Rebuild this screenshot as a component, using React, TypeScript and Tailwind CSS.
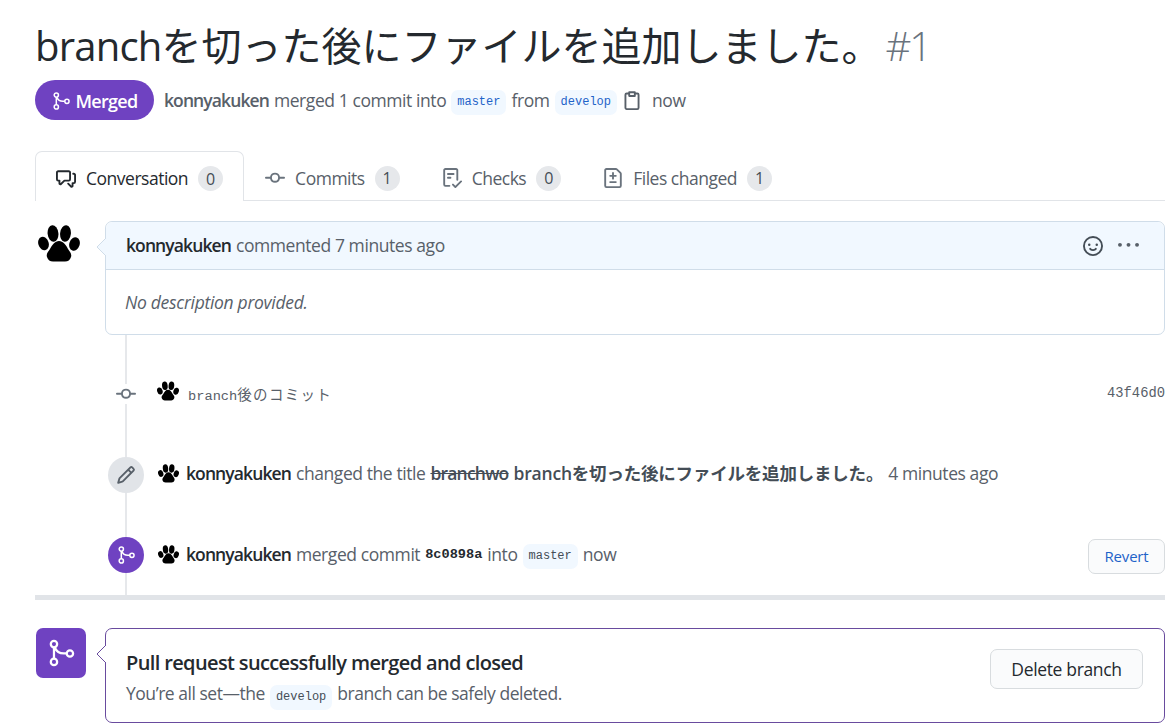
const sans = "font-['Open_Sans','Noto_Sans_CJK_JP',sans-serif]";
const mono = "font-['Liberation_Mono',monospace]";

function Octicon({ d, className }: { d: string; className?: string }) {
  return (
    <svg viewBox="0 0 16 16" fill="currentColor" className={className}>
      <path fillRule="evenodd" d={d} />
    </svg>
  );
}

// thinner than the stock git-merge octicon, the picture's rings are light
function MergeIcon({ className }: { className?: string }) {
  return (
    <svg viewBox="0 0 16 16" fill="none" stroke="currentColor" strokeWidth="1.2" className={className}>
      <circle cx="4.25" cy="3.25" r="1.7" />
      <circle cx="4.25" cy="12.75" r="1.7" />
      <circle cx="12.75" cy="8.25" r="1.7" />
      <path d="M4.25 5v6M4.7 5c.8 2.200 2.500 3.250 4.800 3.250h1.500" />
    </svg>
  );
}

const icons = {
  commit: "M11.93 8.5a4.002 4.002 0 0 1-7.86 0H.75a.75.75 0 0 1 0-1.5h3.32a4.002 4.002 0 0 1 7.86 0h3.32a.75.75 0 0 1 0 1.5Zm-1.43-.75a2.5 2.5 0 1 0-5 0 2.5 2.5 0 0 0 5 0Z",
  discussion: "M1.75 1h8.5c.966 0 1.75.784 1.75 1.75v5.5A1.75 1.75 0 0 1 10.25 10H7.061l-2.574 2.573A1.458 1.458 0 0 1 2 11.543V10h-.25A1.75 1.75 0 0 1 0 8.25v-5.5C0 1.784.784 1 1.75 1ZM1.5 2.75v5.5c0 .138.112.25.25.25h1a.75.75 0 0 1 .75.75v2.19l2.72-2.72a.749.749 0 0 1 .53-.22h3.5a.25.25 0 0 0 .25-.25v-5.5a.25.25 0 0 0-.25-.25h-8.5a.25.25 0 0 0-.25.25Zm13 2a.25.25 0 0 0-.25-.25h-.5a.75.75 0 0 1 0-1.5h.5c.966 0 1.75.784 1.75 1.75v5.5A1.75 1.75 0 0 1 14.25 12H14v1.543a1.458 1.458 0 0 1-2.487 1.03L9.22 12.28a.749.749 0 0 1 .326-1.275.749.749 0 0 1 .734.215l2.22 2.22v-2.19a.75.75 0 0 1 .75-.75h1a.25.25 0 0 0 .25-.25Z",
  checklist: "M2.5 1.75v11.5c0 .138.112.25.25.25h3.17a.75.75 0 0 1 0 1.5H2.75A1.75 1.75 0 0 1 1 13.25V1.75C1 .784 1.784 0 2.75 0h8.5C12.216 0 13 .784 13 1.75v7.736a.75.75 0 0 1-1.5 0V1.75a.25.25 0 0 0-.25-.25h-8.5a.25.25 0 0 0-.25.25Zm13.274 9.537v-.001l-4.557 4.45a.75.75 0 0 1-1.055-.008l-1.943-1.95a.75.75 0 0 1 1.062-1.058l1.419 1.425 4.026-3.932a.75.75 0 1 1 1.048 1.074ZM4.75 4h4.5a.75.75 0 0 1 0 1.5h-4.5a.75.75 0 0 1 0-1.5ZM4 7.75A.75.75 0 0 1 4.75 7h2a.75.75 0 0 1 0 1.5h-2A.75.75 0 0 1 4 7.75Z",
  fileDiff: "M1 1.75C1 .784 1.784 0 2.75 0h7.586c.464 0 .909.184 1.237.513l2.914 2.914c.329.328.513.773.513 1.237v9.586A1.75 1.75 0 0 1 13.25 16H2.75A1.75 1.75 0 0 1 1 14.25Zm1.75-.25a.25.25 0 0 0-.25.25v12.5c0 .138.112.25.25.25h10.5a.25.25 0 0 0 .25-.25V4.664a.25.25 0 0 0-.073-.177l-2.914-2.914a.25.25 0 0 0-.177-.073ZM8 3.25a.75.75 0 0 1 .75.75v1.5h1.5a.75.75 0 0 1 0 1.5h-1.5v1.5a.75.75 0 0 1-1.5 0V7h-1.5a.75.75 0 0 1 0-1.5h1.5V4A.75.75 0 0 1 8 3.25Zm-3 8a.75.75 0 0 1 .75-.75h4.5a.75.75 0 0 1 0 1.5h-4.5a.75.75 0 0 1-.75-.75Z",
  smiley: "M8 0a8 8 0 1 1 0 16A8 8 0 0 1 8 0ZM1.5 8a6.5 6.5 0 1 0 13 0 6.5 6.5 0 0 0-13 0Zm3.82 1.636a.75.75 0 0 1 1.038.175l.007.009c.103.118.22.222.35.31.264.178.683.37 1.285.37.602 0 1.02-.192 1.285-.371.13-.088.247-.192.35-.31l.007-.008a.75.75 0 0 1 1.222.87l-.022-.015c.02.013.021.015.021.015v.001l-.001.002-.002.003-.005.007-.014.019a2.066 2.066 0 0 1-.184.213c-.16.166-.338.316-.53.445-.63.418-1.37.638-2.127.629-.946 0-1.652-.308-2.126-.63a3.331 3.331 0 0 1-.715-.657l-.014-.02-.005-.006-.002-.003v-.002h-.001l.613-.432-.614.43a.75.75 0 0 1 .183-1.044ZM12 7a1 1 0 1 1-2 0 1 1 0 0 1 2 0ZM5 8a1 1 0 1 1 0-2 1 1 0 0 1 0 2Z",
  kebab: "M8 9a1.5 1.5 0 1 0 0-3 1.5 1.5 0 0 0 0 3ZM1.5 9a1.5 1.5 0 1 0 0-3 1.5 1.5 0 0 0 0 3Zm13 0a1.5 1.5 0 1 0 0-3 1.5 1.5 0 0 0 0 3Z",
  pencil: "M11.013 1.427a1.75 1.75 0 0 1 2.474 0l1.086 1.086a1.75 1.75 0 0 1 0 2.474l-8.61 8.61c-.21.21-.47.364-.756.445l-3.251.93a.75.75 0 0 1-.927-.928l.929-3.25c.081-.286.235-.547.445-.758l8.61-8.61Zm.176 4.823L9.75 4.81l-6.286 6.287a.253.253 0 0 0-.064.108l-.558 1.953 1.953-.558a.253.253 0 0 0 .108-.064Zm1.238-3.763a.25.25 0 0 0-.354 0L10.811 3.75l1.439 1.44 1.263-1.263a.25.25 0 0 0 0-.354Z",
  clippy: "M5.75 1a.75.75 0 0 0-.75.75v.25H3.75A1.75 1.75 0 0 0 2 3.75v10.5c0 .966.784 1.75 1.75 1.75h8.5A1.75 1.75 0 0 0 14 14.25V3.75A1.75 1.75 0 0 0 12.25 2H11v-.25a.75.75 0 0 0-.75-.75ZM6.500 2.500h3V4h-3ZM5 3.500v1.250c0 .414.336.75.75.75h4.500a.75.75 0 0 0 .75-.75V3.500h1.250a.25.25 0 0 1 .25.25v10.500a.25.25 0 0 1-.25.25h-8.500a.25.25 0 0 1-.25-.25V3.750a.25.25 0 0 1 .25-.25Z",
};

function Paw({ className }: { className?: string }) {
  return (
    <svg viewBox="0 0 42 37" fill="#000" className={className}>
      <ellipse cx="5.500" cy="18.500" rx="5.200" ry="6.800" transform="rotate(-18 5.500 18.500)" />
      <ellipse cx="15" cy="8.500" rx="5.400" ry="8.300" transform="rotate(-6 15 8.500)" />
      <ellipse cx="27.500" cy="8.500" rx="5.400" ry="8.300" transform="rotate(6 27.500 8.500)" />
      <ellipse cx="36.500" cy="19" rx="5.200" ry="6.800" transform="rotate(18 36.500 19)" />
      <path d="M21 16c4 0 7 4 9 8 2 3 4 5 3 8-1 3-3 4.500-6 4.500H15c-3 0-5-1.500-6-4.500-1-3 1-5 3-8 2-4 5-8 9-8Z" />
    </svg>
  );
}

function Tab({ icon, label, count, active }: { icon: string; label: string; count: number; active?: boolean }) {
  return (
    <div
      className={
        active
          ? "flex items-center h-[50px] pt-1 px-5 border border-b-0 border-[#e1e4e8] rounded-t-[7px] bg-white text-[#24292e] relative"
          : "flex items-center h-[50px] pt-1 px-5 border border-transparent text-[#586069]"
      }
    >
      <Octicon d={icon} className={active ? "w-5 h-5 text-[#24292e]" : "w-5 h-5 text-[#6a737d]"} />
      <span className="ml-[10px] text-[17.5px] tracking-[-0.49px]">{label}</span>
      <span className="ml-[10px] w-[25px] h-[25px] rounded-full bg-[#e6e8eb] text-[#444d56] text-[16px] tracking-normal flex items-center justify-center">
        {count}
      </span>
    </div>
  );
}

function Chip({ children, blue }: { children: string; blue?: boolean }) {
  return (
    <span
      className={
        `inline-flex items-center h-[25px] px-[6px] rounded-[7px] bg-[#f1f8ff] ${mono} text-[12px] tracking-normal mx-[5px] align-middle translate-y-[2px] ` +
        (blue ? "text-[#1f63c9]" : "text-[#444d56]")
      }
    >
      {children}
    </span>
  );
}

function Caret({ border, fill }: { border: string; fill: string }) {
  return (
    <svg viewBox="0 0 10 18" className="absolute left-[-10px] w-[10px] h-[18px] top-[16px]">
      <path d="M10 0 L1 9 L10 18" fill={fill} stroke={border} strokeWidth="1" />
    </svg>
  );
}

export default function App() {
  return (
    <div className={`${sans} w-[1172px] h-[728px] overflow-hidden bg-white pl-[35px] pr-[7px] text-[17.5px] tracking-[-0.42px] text-[#586069]`}>
      <h1 className="h-[80px] pt-[21px] text-[40px] leading-[50px] tracking-normal text-[#24292e] whitespace-nowrap">
        <span className="tracking-[-0.8px]">branch</span>を切った後にファイルを追加しました。
        <span className="ml-[4px] text-[#6a737d] font-light tracking-[-2px]">#1</span>
      </h1>

      <div className="flex items-center h-10 whitespace-nowrap">
        <span className="flex items-center justify-center pt-[2px] w-[119px] h-10 rounded-full bg-[#6f42c1] text-white text-[18px] tracking-[-0.7px] font-semibold">
          <MergeIcon className="w-5 h-5 mr-[4px]" />
          Merged
        </span>
        <div className="ml-[10px] flex items-center">
          <span className="font-semibold tracking-[-0.9px]">konnyakuken</span>
          <span className="ml-[5px]">merged 1 commit into</span>
          <Chip blue>master</Chip>
          <span>from</span>
          <Chip blue>develop</Chip>
          <Octicon d={icons.clippy} className="w-5 h-5 text-[#586069]" />
          <span className="ml-[10px]">now</span>
        </div>
      </div>

      <div className="flex mt-[31px] border-b border-[#e1e4e8] h-[50px]">
        <Tab icon={icons.discussion} label="Conversation" count={0} active />
        <Tab icon={icons.commit} label="Commits" count={1} />
        <Tab icon={icons.checklist} label="Checks" count={0} />
        <Tab icon={icons.fileDiff} label="Files changed" count={1} />
      </div>

      <div className="flex pt-5">
        <div className="w-[70px] shrink-0 pt-[4px]">
          <Paw className="ml-[3px] w-[42px] h-[37px]" />
        </div>
        <div className="relative flex-1 h-[114px] border border-[#d0dde9] rounded-[7px] bg-white">
          <Caret border="#d0dde9" fill="#f1f8ff" />
          <div className="flex items-center h-[48px] px-5 bg-[#f1f8ff] border-b border-[#d0dde9] rounded-t-[7px]">
            <span className="font-semibold tracking-[-0.9px] text-[#24292e]">konnyakuken</span>
            <span className="ml-[5px]">commented 7 minutes ago</span>
            <Octicon d={icons.smiley} className="ml-auto w-5 h-5 text-[#444d56]" />
            <Octicon d={icons.kebab} className="ml-[15px] mr-[5px] w-[21px] h-[21px] text-[#586069]" />
          </div>
          <p className="px-[19px] pt-[19px] italic tracking-[-0.3px]">No description provided.</p>
        </div>
      </div>

      <div className="relative pt-5 h-[260px]">
        <div className="absolute left-[90px] top-0 bottom-0 w-[2px] bg-[#e6e8eb]" />
        <div className="relative flex items-center h-[80px] pb-[2px] pl-[73px] tracking-normal">
          <div className="w-9 flex justify-center bg-white">
            <Octicon d={icons.commit} className="w-5 h-5 text-[#6a737d]" />
          </div>
          <Paw className="ml-[13px] mb-[6px] w-[22px] h-[20px]" />
          <span className="ml-[9px] text-[#586069] whitespace-nowrap">
            <span className={`${mono} text-[13.7px]`}>branch</span>
            <span className="font-['Noto_Sans_CJK_JP',sans-serif] text-[14.500px] tracking-[1.3px]">後のコミット</span>
          </span>
          <span className={`ml-auto ${mono} text-[13.8px] text-[#586069]`}>43f46d0</span>
        </div>
        <div className="relative flex items-center h-[80px] pl-[73px] whitespace-nowrap">
          <div className="w-9 h-9 rounded-full bg-[#e1e4e8] flex items-center justify-center">
            <Octicon d={icons.pencil} className="w-5 h-5 text-[#586069]" />
          </div>
          <div className="flex items-center mb-[3px]">
            <Paw className="ml-[14px] w-[21px] h-[19px]" />
            <span className="ml-[7px] font-semibold tracking-[-0.9px] text-[#24292e]">konnyakuken</span>
            <span className="ml-[5px]">changed the title</span>
            <span className="ml-[5px] line-through font-semibold tracking-[-0.8px] text-[#444d56]">branchwo</span>
            <span className="ml-[5px] font-semibold tracking-[-0.2px] text-[#444d56]">branchを切った後にファイルを追加しました。</span>
            <span className="ml-[5px]">4 minutes ago</span>
          </div>
        </div>
        <div className="relative flex items-center h-[80px] pl-[73px] whitespace-nowrap">
          <div className="w-9 h-9 rounded-full bg-[#6f42c1] flex items-center justify-center">
            <MergeIcon className="w-5 h-5 text-white" />
          </div>
          <div className="flex items-center mb-[2px]">
            <Paw className="ml-[14px] w-[21px] h-[19px]" />
            <span className="ml-[7px] font-semibold tracking-[-0.9px] text-[#24292e]">konnyakuken</span>
            <span className="ml-[5px]">merged commit</span>
            <span className={`ml-[5px] pt-[2px] ${mono} font-bold text-[13.6px] tracking-normal text-[#24292e]`}>8c0898a</span>
            <span className="ml-[5px]">into</span>
            <Chip>master</Chip>
            <span>now</span>
          </div>
          <button className="ml-auto mt-[3px] w-[77px] h-[35px] rounded-[7px] border border-[#d8dcdf] bg-[#fafbfc] text-[15px] font-medium tracking-[-0.2px] text-[#1f63c9]">
            Revert
          </button>
        </div>
      </div>

      <div className="h-[5px] bg-[#e1e4e8]" />

      <div className="flex pt-[28px]">
        <div className="w-[70px] shrink-0">
          <div className="ml-px w-[50px] h-[50px] rounded-[7px] bg-[#6f42c1] flex items-center justify-center">
            <MergeIcon className="w-[30px] h-[30px] text-white" />
          </div>
        </div>
        <div className="relative flex-1 h-[95px] border border-[#694b9e] rounded-[7px] bg-white flex items-start pl-5 pr-[21px]">
          <Caret border="#694b9e" fill="#fff" />
          <div className="pt-[21px]">
            <h3 className="text-[20px] leading-[26px] font-semibold tracking-[-0.63px] text-[#24292e]">Pull request successfully merged and closed</h3>
            <p className="mt-[2px] whitespace-nowrap leading-[30px] tracking-[-0.47px]">
              You’re all set—the
              <Chip>develop</Chip>
              branch can be safely deleted.
            </p>
          </div>
          <button className="ml-auto mt-5 w-[153px] h-10 rounded-[7px] border border-[#d8dcdf] bg-[#fafbfc] text-[17.5px] font-medium tracking-[-0.35px] text-[#24292e]">
            Delete branch
          </button>
        </div>
      </div>
    </div>
  );
}
